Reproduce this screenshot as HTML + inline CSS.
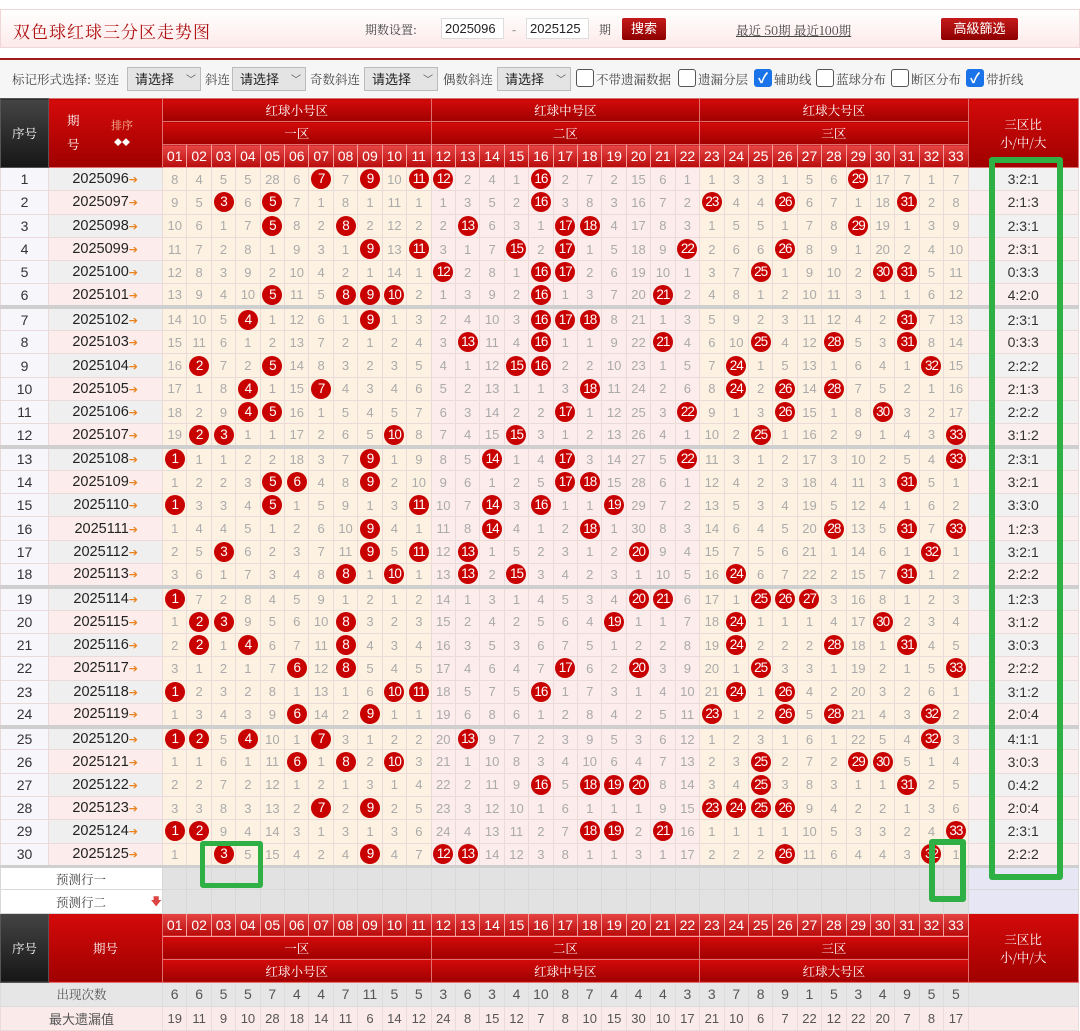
<!DOCTYPE html>
<html><head><meta charset="utf-8"><style>
*{margin:0;padding:0;box-sizing:border-box}
body{width:1080px;height:1018px;overflow:hidden;background:#fff;font-family:"Liberation Sans","Noto Sans CJK SC",sans-serif;position:relative}
.top{position:absolute;left:0;top:9px;width:1080px;height:39px;background:linear-gradient(#fff,#fdeaea);border:1px solid #f1d6d6}
.title{position:absolute;left:12px;top:8px;font-family:"Noto Serif CJK SC",serif;font-size:17px;color:#b01010;letter-spacing:1px}
.lab{position:absolute;top:11px;font-family:"Noto Serif CJK SC",serif;font-size:12px;color:#444}
.inp{position:absolute;top:8px;height:21px;width:63px;background:#fff;border:1px solid #ddd;font-size:13px;color:#222;line-height:19px;padding-left:3px}
.btn{position:absolute;background:linear-gradient(#c41a1a,#8e0000);color:#fff;font-size:13px;text-align:center;border-radius:2px}
.lnk{position:absolute;left:735px;top:11px;font-size:12.5px;color:#444;text-decoration:underline;font-family:"Noto Serif CJK SC",serif}
.bar{position:absolute;left:0;top:58px;width:1080px;height:40px;background:#f6f6f6;border-top:2px solid #a31a1a}
.bar span{position:absolute;top:10px;font-family:"Noto Serif CJK SC",serif;font-size:12.5px;color:#444}
.sel{position:absolute;top:7px;height:24px;width:74px;background:#e4e4e4;border:1px solid #bbb;font-size:13px;padding-left:7px;line-height:22px;color:#222;font-family:"Noto Sans CJK SC",sans-serif}
.sel:after{content:"﹀";position:absolute;right:4px;top:0;font-size:10px;color:#555}
.cb{position:absolute;top:9px;width:18px;height:18px;border:1px solid #555;border-radius:3px;background:#fff}
.cb.on{background:#1a73e8;border-color:#1a73e8;color:#fff;font-size:14px;line-height:16px;text-align:center;font-weight:bold}
table{position:absolute;left:0;top:98px;width:1078px;border-collapse:collapse;table-layout:fixed}
td,th{text-align:center;overflow:hidden;white-space:nowrap}
th{color:#fff;font-weight:normal;font-family:"Noto Serif CJK SC",serif;font-size:12.5px;background:linear-gradient(#d40a0a,#a00000);border:1px solid #e07070}
th.k{background:linear-gradient(#444,#161616);border:1px solid #555}
th.n{font-family:"Liberation Sans",sans-serif;font-size:14px;background:linear-gradient(#e84545,#b80c0c);border:1px solid #f3a0a0}
.hh th{height:23px}
tbody td{height:23.3px;font-size:13px;color:#aaa;border:1px solid #eadada}
td.s{background:#f6f6fb;color:#333;font-size:14px}
td.q{color:#222;font-size:14.5px;text-align:right;padding-right:24px}
tr.a td.q{background:#efefef} tr.b td.q{background:#fcecec}
td.q i{font-style:normal;color:#e8821e;font-size:11px;font-family:"DejaVu Sans",sans-serif}
td.r{color:#333;font-size:14px;background:#f1f1f1}
tr.b td.r{background:#fbeeee}
tr.g td{border-top:4px solid #cfcfcf}
td b{display:inline-block;width:20px;height:20px;border-radius:50%;background:#c80000;color:#fff;font-weight:normal;line-height:20px;font-size:13.5px;letter-spacing:-1px;vertical-align:middle}
col.z1,col.z3{background:#fdf2e2}
col.z2{background:#fcecec}
tr.p td{background:#e2e2e2;height:23.5px;border:1px solid #d8d8d8}
tr.p td.w{background:#fff;color:#444;text-align:left;padding-left:55px;font-family:"Noto Serif CJK SC",serif;font-size:12.5px}
tr.p td.v{background:#e6e6f4}
tr.c td{background:#e6e6e6;color:#555;font-size:14px;height:24px;border:1px solid #ddd}
tr.c td.w{font-family:"Noto Serif CJK SC",serif;font-size:12.5px}
tr.m td{background:#fbeaea;height:24px;color:#555}
.gr{position:absolute;border:6px solid #2eb045;border-radius:3px}
</style></head><body>
<div class="top">
<div class="title">双色球红球三分区走势图</div>
<div class="lab" style="left:364px">期数设置:</div>
<div class="inp" style="left:440px">2025096</div>
<div class="lab" style="left:511px">-</div>
<div class="inp" style="left:525px">2025125</div>
<div class="lab" style="left:598px">期</div>
<div class="btn" style="left:621px;top:8px;width:44px;height:22px;line-height:22px">搜索</div>
<div class="lnk">最近 50期 最近100期</div>
<div class="btn" style="left:940px;top:8px;width:77px;height:22px;line-height:22px">高級篩选</div>
</div>
<div class="bar">
<span style="left:12px">标记形式选择: 竖连</span>
<div class="sel" style="left:127px">请选择</div>
<span style="left:205px">斜连</span>
<div class="sel" style="left:232px">请选择</div>
<span style="left:310px">奇数斜连</span>
<div class="sel" style="left:364px">请选择</div>
<span style="left:443px">偶数斜连</span>
<div class="sel" style="left:497px">请选择</div>
<div class="cb" style="left:576px"></div><span style="left:596px">不带遗漏数据</span>
<div class="cb" style="left:678px"></div><span style="left:698px">遗漏分层</span>
<div class="cb on" style="left:754px">✓</div><span style="left:774px">辅助线</span>
<div class="cb" style="left:816px"></div><span style="left:836px">蓝球分布</span>
<div class="cb" style="left:891px"></div><span style="left:911px">断区分布</span>
<div class="cb on" style="left:966px">✓</div><span style="left:986px">带折线</span>
</div>
<table>
<colgroup><col style="width:48px"><col style="width:114px">
<col class="z1" span="11" style="width:24.42px"><col class="z2" span="11" style="width:24.42px"><col class="z3" span="11" style="width:24.42px"><col style="width:110px"></colgroup>
<thead>
<tr class="hh"><th class="k" rowspan="3" style="height:69px">序号</th><th rowspan="3"><div style="position:relative;height:60px"><span style="position:absolute;left:18px;top:8px">期</span><span style="position:absolute;left:18px;top:32px">号</span><span style="position:absolute;left:62px;top:14px;font-size:11px;color:#f7c0a0">排序<br><span style="font-size:8px;color:#fff">◆◆</span></span></div></th><th colspan="11">红球小号区</th><th colspan="11">红球中号区</th><th colspan="11">红球大号区</th><th rowspan="3">三区比<br>小/中/大</th></tr>
<tr class="hh"><th colspan="11">一区</th><th colspan="11">二区</th><th colspan="11">三区</th></tr>
<tr class="hh"><th class="n">01</th><th class="n">02</th><th class="n">03</th><th class="n">04</th><th class="n">05</th><th class="n">06</th><th class="n">07</th><th class="n">08</th><th class="n">09</th><th class="n">10</th><th class="n">11</th><th class="n">12</th><th class="n">13</th><th class="n">14</th><th class="n">15</th><th class="n">16</th><th class="n">17</th><th class="n">18</th><th class="n">19</th><th class="n">20</th><th class="n">21</th><th class="n">22</th><th class="n">23</th><th class="n">24</th><th class="n">25</th><th class="n">26</th><th class="n">27</th><th class="n">28</th><th class="n">29</th><th class="n">30</th><th class="n">31</th><th class="n">32</th><th class="n">33</th></tr>
</thead>
<tbody>
<tr class="a"><td class="s">1</td><td class="q">2025096<i>➔</i></td><td>8</td><td>4</td><td>5</td><td>5</td><td>28</td><td>6</td><td><b>7</b></td><td>7</td><td><b>9</b></td><td>10</td><td><b>11</b></td><td><b>12</b></td><td>2</td><td>4</td><td>1</td><td><b>16</b></td><td>2</td><td>7</td><td>2</td><td>15</td><td>6</td><td>1</td><td>1</td><td>3</td><td>3</td><td>1</td><td>5</td><td>6</td><td><b>29</b></td><td>17</td><td>7</td><td>1</td><td>7</td><td class="r">3:2:1</td></tr>
<tr class="b"><td class="s">2</td><td class="q">2025097<i>➔</i></td><td>9</td><td>5</td><td><b>3</b></td><td>6</td><td><b>5</b></td><td>7</td><td>1</td><td>8</td><td>1</td><td>11</td><td>1</td><td>1</td><td>3</td><td>5</td><td>2</td><td><b>16</b></td><td>3</td><td>8</td><td>3</td><td>16</td><td>7</td><td>2</td><td><b>23</b></td><td>4</td><td>4</td><td><b>26</b></td><td>6</td><td>7</td><td>1</td><td>18</td><td><b>31</b></td><td>2</td><td>8</td><td class="r">2:1:3</td></tr>
<tr class="a"><td class="s">3</td><td class="q">2025098<i>➔</i></td><td>10</td><td>6</td><td>1</td><td>7</td><td><b>5</b></td><td>8</td><td>2</td><td><b>8</b></td><td>2</td><td>12</td><td>2</td><td>2</td><td><b>13</b></td><td>6</td><td>3</td><td>1</td><td><b>17</b></td><td><b>18</b></td><td>4</td><td>17</td><td>8</td><td>3</td><td>1</td><td>5</td><td>5</td><td>1</td><td>7</td><td>8</td><td><b>29</b></td><td>19</td><td>1</td><td>3</td><td>9</td><td class="r">2:3:1</td></tr>
<tr class="b"><td class="s">4</td><td class="q">2025099<i>➔</i></td><td>11</td><td>7</td><td>2</td><td>8</td><td>1</td><td>9</td><td>3</td><td>1</td><td><b>9</b></td><td>13</td><td><b>11</b></td><td>3</td><td>1</td><td>7</td><td><b>15</b></td><td>2</td><td><b>17</b></td><td>1</td><td>5</td><td>18</td><td>9</td><td><b>22</b></td><td>2</td><td>6</td><td>6</td><td><b>26</b></td><td>8</td><td>9</td><td>1</td><td>20</td><td>2</td><td>4</td><td>10</td><td class="r">2:3:1</td></tr>
<tr class="a"><td class="s">5</td><td class="q">2025100<i>➔</i></td><td>12</td><td>8</td><td>3</td><td>9</td><td>2</td><td>10</td><td>4</td><td>2</td><td>1</td><td>14</td><td>1</td><td><b>12</b></td><td>2</td><td>8</td><td>1</td><td><b>16</b></td><td><b>17</b></td><td>2</td><td>6</td><td>19</td><td>10</td><td>1</td><td>3</td><td>7</td><td><b>25</b></td><td>1</td><td>9</td><td>10</td><td>2</td><td><b>30</b></td><td><b>31</b></td><td>5</td><td>11</td><td class="r">0:3:3</td></tr>
<tr class="b"><td class="s">6</td><td class="q">2025101<i>➔</i></td><td>13</td><td>9</td><td>4</td><td>10</td><td><b>5</b></td><td>11</td><td>5</td><td><b>8</b></td><td><b>9</b></td><td><b>10</b></td><td>2</td><td>1</td><td>3</td><td>9</td><td>2</td><td><b>16</b></td><td>1</td><td>3</td><td>7</td><td>20</td><td><b>21</b></td><td>2</td><td>4</td><td>8</td><td>1</td><td>2</td><td>10</td><td>11</td><td>3</td><td>1</td><td>1</td><td>6</td><td>12</td><td class="r">4:2:0</td></tr>
<tr class="a g"><td class="s">7</td><td class="q">2025102<i>➔</i></td><td>14</td><td>10</td><td>5</td><td><b>4</b></td><td>1</td><td>12</td><td>6</td><td>1</td><td><b>9</b></td><td>1</td><td>3</td><td>2</td><td>4</td><td>10</td><td>3</td><td><b>16</b></td><td><b>17</b></td><td><b>18</b></td><td>8</td><td>21</td><td>1</td><td>3</td><td>5</td><td>9</td><td>2</td><td>3</td><td>11</td><td>12</td><td>4</td><td>2</td><td><b>31</b></td><td>7</td><td>13</td><td class="r">2:3:1</td></tr>
<tr class="b"><td class="s">8</td><td class="q">2025103<i>➔</i></td><td>15</td><td>11</td><td>6</td><td>1</td><td>2</td><td>13</td><td>7</td><td>2</td><td>1</td><td>2</td><td>4</td><td>3</td><td><b>13</b></td><td>11</td><td>4</td><td><b>16</b></td><td>1</td><td>1</td><td>9</td><td>22</td><td><b>21</b></td><td>4</td><td>6</td><td>10</td><td><b>25</b></td><td>4</td><td>12</td><td><b>28</b></td><td>5</td><td>3</td><td><b>31</b></td><td>8</td><td>14</td><td class="r">0:3:3</td></tr>
<tr class="a"><td class="s">9</td><td class="q">2025104<i>➔</i></td><td>16</td><td><b>2</b></td><td>7</td><td>2</td><td><b>5</b></td><td>14</td><td>8</td><td>3</td><td>2</td><td>3</td><td>5</td><td>4</td><td>1</td><td>12</td><td><b>15</b></td><td><b>16</b></td><td>2</td><td>2</td><td>10</td><td>23</td><td>1</td><td>5</td><td>7</td><td><b>24</b></td><td>1</td><td>5</td><td>13</td><td>1</td><td>6</td><td>4</td><td>1</td><td><b>32</b></td><td>15</td><td class="r">2:2:2</td></tr>
<tr class="b"><td class="s">10</td><td class="q">2025105<i>➔</i></td><td>17</td><td>1</td><td>8</td><td><b>4</b></td><td>1</td><td>15</td><td><b>7</b></td><td>4</td><td>3</td><td>4</td><td>6</td><td>5</td><td>2</td><td>13</td><td>1</td><td>1</td><td>3</td><td><b>18</b></td><td>11</td><td>24</td><td>2</td><td>6</td><td>8</td><td><b>24</b></td><td>2</td><td><b>26</b></td><td>14</td><td><b>28</b></td><td>7</td><td>5</td><td>2</td><td>1</td><td>16</td><td class="r">2:1:3</td></tr>
<tr class="a"><td class="s">11</td><td class="q">2025106<i>➔</i></td><td>18</td><td>2</td><td>9</td><td><b>4</b></td><td><b>5</b></td><td>16</td><td>1</td><td>5</td><td>4</td><td>5</td><td>7</td><td>6</td><td>3</td><td>14</td><td>2</td><td>2</td><td><b>17</b></td><td>1</td><td>12</td><td>25</td><td>3</td><td><b>22</b></td><td>9</td><td>1</td><td>3</td><td><b>26</b></td><td>15</td><td>1</td><td>8</td><td><b>30</b></td><td>3</td><td>2</td><td>17</td><td class="r">2:2:2</td></tr>
<tr class="b"><td class="s">12</td><td class="q">2025107<i>➔</i></td><td>19</td><td><b>2</b></td><td><b>3</b></td><td>1</td><td>1</td><td>17</td><td>2</td><td>6</td><td>5</td><td><b>10</b></td><td>8</td><td>7</td><td>4</td><td>15</td><td><b>15</b></td><td>3</td><td>1</td><td>2</td><td>13</td><td>26</td><td>4</td><td>1</td><td>10</td><td>2</td><td><b>25</b></td><td>1</td><td>16</td><td>2</td><td>9</td><td>1</td><td>4</td><td>3</td><td><b>33</b></td><td class="r">3:1:2</td></tr>
<tr class="a g"><td class="s">13</td><td class="q">2025108<i>➔</i></td><td><b>1</b></td><td>1</td><td>1</td><td>2</td><td>2</td><td>18</td><td>3</td><td>7</td><td><b>9</b></td><td>1</td><td>9</td><td>8</td><td>5</td><td><b>14</b></td><td>1</td><td>4</td><td><b>17</b></td><td>3</td><td>14</td><td>27</td><td>5</td><td><b>22</b></td><td>11</td><td>3</td><td>1</td><td>2</td><td>17</td><td>3</td><td>10</td><td>2</td><td>5</td><td>4</td><td><b>33</b></td><td class="r">2:3:1</td></tr>
<tr class="b"><td class="s">14</td><td class="q">2025109<i>➔</i></td><td>1</td><td>2</td><td>2</td><td>3</td><td><b>5</b></td><td><b>6</b></td><td>4</td><td>8</td><td><b>9</b></td><td>2</td><td>10</td><td>9</td><td>6</td><td>1</td><td>2</td><td>5</td><td><b>17</b></td><td><b>18</b></td><td>15</td><td>28</td><td>6</td><td>1</td><td>12</td><td>4</td><td>2</td><td>3</td><td>18</td><td>4</td><td>11</td><td>3</td><td><b>31</b></td><td>5</td><td>1</td><td class="r">3:2:1</td></tr>
<tr class="a"><td class="s">15</td><td class="q">2025110<i>➔</i></td><td><b>1</b></td><td>3</td><td>3</td><td>4</td><td><b>5</b></td><td>1</td><td>5</td><td>9</td><td>1</td><td>3</td><td><b>11</b></td><td>10</td><td>7</td><td><b>14</b></td><td>3</td><td><b>16</b></td><td>1</td><td>1</td><td><b>19</b></td><td>29</td><td>7</td><td>2</td><td>13</td><td>5</td><td>3</td><td>4</td><td>19</td><td>5</td><td>12</td><td>4</td><td>1</td><td>6</td><td>2</td><td class="r">3:3:0</td></tr>
<tr class="b"><td class="s">16</td><td class="q">2025111<i>➔</i></td><td>1</td><td>4</td><td>4</td><td>5</td><td>1</td><td>2</td><td>6</td><td>10</td><td><b>9</b></td><td>4</td><td>1</td><td>11</td><td>8</td><td><b>14</b></td><td>4</td><td>1</td><td>2</td><td><b>18</b></td><td>1</td><td>30</td><td>8</td><td>3</td><td>14</td><td>6</td><td>4</td><td>5</td><td>20</td><td><b>28</b></td><td>13</td><td>5</td><td><b>31</b></td><td>7</td><td><b>33</b></td><td class="r">1:2:3</td></tr>
<tr class="a"><td class="s">17</td><td class="q">2025112<i>➔</i></td><td>2</td><td>5</td><td><b>3</b></td><td>6</td><td>2</td><td>3</td><td>7</td><td>11</td><td><b>9</b></td><td>5</td><td><b>11</b></td><td>12</td><td><b>13</b></td><td>1</td><td>5</td><td>2</td><td>3</td><td>1</td><td>2</td><td><b>20</b></td><td>9</td><td>4</td><td>15</td><td>7</td><td>5</td><td>6</td><td>21</td><td>1</td><td>14</td><td>6</td><td>1</td><td><b>32</b></td><td>1</td><td class="r">3:2:1</td></tr>
<tr class="b"><td class="s">18</td><td class="q">2025113<i>➔</i></td><td>3</td><td>6</td><td>1</td><td>7</td><td>3</td><td>4</td><td>8</td><td><b>8</b></td><td>1</td><td><b>10</b></td><td>1</td><td>13</td><td><b>13</b></td><td>2</td><td><b>15</b></td><td>3</td><td>4</td><td>2</td><td>3</td><td>1</td><td>10</td><td>5</td><td>16</td><td><b>24</b></td><td>6</td><td>7</td><td>22</td><td>2</td><td>15</td><td>7</td><td><b>31</b></td><td>1</td><td>2</td><td class="r">2:2:2</td></tr>
<tr class="a g"><td class="s">19</td><td class="q">2025114<i>➔</i></td><td><b>1</b></td><td>7</td><td>2</td><td>8</td><td>4</td><td>5</td><td>9</td><td>1</td><td>2</td><td>1</td><td>2</td><td>14</td><td>1</td><td>3</td><td>1</td><td>4</td><td>5</td><td>3</td><td>4</td><td><b>20</b></td><td><b>21</b></td><td>6</td><td>17</td><td>1</td><td><b>25</b></td><td><b>26</b></td><td><b>27</b></td><td>3</td><td>16</td><td>8</td><td>1</td><td>2</td><td>3</td><td class="r">1:2:3</td></tr>
<tr class="b"><td class="s">20</td><td class="q">2025115<i>➔</i></td><td>1</td><td><b>2</b></td><td><b>3</b></td><td>9</td><td>5</td><td>6</td><td>10</td><td><b>8</b></td><td>3</td><td>2</td><td>3</td><td>15</td><td>2</td><td>4</td><td>2</td><td>5</td><td>6</td><td>4</td><td><b>19</b></td><td>1</td><td>1</td><td>7</td><td>18</td><td><b>24</b></td><td>1</td><td>1</td><td>1</td><td>4</td><td>17</td><td><b>30</b></td><td>2</td><td>3</td><td>4</td><td class="r">3:1:2</td></tr>
<tr class="a"><td class="s">21</td><td class="q">2025116<i>➔</i></td><td>2</td><td><b>2</b></td><td>1</td><td><b>4</b></td><td>6</td><td>7</td><td>11</td><td><b>8</b></td><td>4</td><td>3</td><td>4</td><td>16</td><td>3</td><td>5</td><td>3</td><td>6</td><td>7</td><td>5</td><td>1</td><td>2</td><td>2</td><td>8</td><td>19</td><td><b>24</b></td><td>2</td><td>2</td><td>2</td><td><b>28</b></td><td>18</td><td>1</td><td><b>31</b></td><td>4</td><td>5</td><td class="r">3:0:3</td></tr>
<tr class="b"><td class="s">22</td><td class="q">2025117<i>➔</i></td><td>3</td><td>1</td><td>2</td><td>1</td><td>7</td><td><b>6</b></td><td>12</td><td><b>8</b></td><td>5</td><td>4</td><td>5</td><td>17</td><td>4</td><td>6</td><td>4</td><td>7</td><td><b>17</b></td><td>6</td><td>2</td><td><b>20</b></td><td>3</td><td>9</td><td>20</td><td>1</td><td><b>25</b></td><td>3</td><td>3</td><td>1</td><td>19</td><td>2</td><td>1</td><td>5</td><td><b>33</b></td><td class="r">2:2:2</td></tr>
<tr class="a"><td class="s">23</td><td class="q">2025118<i>➔</i></td><td><b>1</b></td><td>2</td><td>3</td><td>2</td><td>8</td><td>1</td><td>13</td><td>1</td><td>6</td><td><b>10</b></td><td><b>11</b></td><td>18</td><td>5</td><td>7</td><td>5</td><td><b>16</b></td><td>1</td><td>7</td><td>3</td><td>1</td><td>4</td><td>10</td><td>21</td><td><b>24</b></td><td>1</td><td><b>26</b></td><td>4</td><td>2</td><td>20</td><td>3</td><td>2</td><td>6</td><td>1</td><td class="r">3:1:2</td></tr>
<tr class="b"><td class="s">24</td><td class="q">2025119<i>➔</i></td><td>1</td><td>3</td><td>4</td><td>3</td><td>9</td><td><b>6</b></td><td>14</td><td>2</td><td><b>9</b></td><td>1</td><td>1</td><td>19</td><td>6</td><td>8</td><td>6</td><td>1</td><td>2</td><td>8</td><td>4</td><td>2</td><td>5</td><td>11</td><td><b>23</b></td><td>1</td><td>2</td><td><b>26</b></td><td>5</td><td><b>28</b></td><td>21</td><td>4</td><td>3</td><td><b>32</b></td><td>2</td><td class="r">2:0:4</td></tr>
<tr class="a g"><td class="s">25</td><td class="q">2025120<i>➔</i></td><td><b>1</b></td><td><b>2</b></td><td>5</td><td><b>4</b></td><td>10</td><td>1</td><td><b>7</b></td><td>3</td><td>1</td><td>2</td><td>2</td><td>20</td><td><b>13</b></td><td>9</td><td>7</td><td>2</td><td>3</td><td>9</td><td>5</td><td>3</td><td>6</td><td>12</td><td>1</td><td>2</td><td>3</td><td>1</td><td>6</td><td>1</td><td>22</td><td>5</td><td>4</td><td><b>32</b></td><td>3</td><td class="r">4:1:1</td></tr>
<tr class="b"><td class="s">26</td><td class="q">2025121<i>➔</i></td><td>1</td><td>1</td><td>6</td><td>1</td><td>11</td><td><b>6</b></td><td>1</td><td><b>8</b></td><td>2</td><td><b>10</b></td><td>3</td><td>21</td><td>1</td><td>10</td><td>8</td><td>3</td><td>4</td><td>10</td><td>6</td><td>4</td><td>7</td><td>13</td><td>2</td><td>3</td><td><b>25</b></td><td>2</td><td>7</td><td>2</td><td><b>29</b></td><td><b>30</b></td><td>5</td><td>1</td><td>4</td><td class="r">3:0:3</td></tr>
<tr class="a"><td class="s">27</td><td class="q">2025122<i>➔</i></td><td>2</td><td>2</td><td>7</td><td>2</td><td>12</td><td>1</td><td>2</td><td>1</td><td>3</td><td>1</td><td>4</td><td>22</td><td>2</td><td>11</td><td>9</td><td><b>16</b></td><td>5</td><td><b>18</b></td><td><b>19</b></td><td><b>20</b></td><td>8</td><td>14</td><td>3</td><td>4</td><td><b>25</b></td><td>3</td><td>8</td><td>3</td><td>1</td><td>1</td><td><b>31</b></td><td>2</td><td>5</td><td class="r">0:4:2</td></tr>
<tr class="b"><td class="s">28</td><td class="q">2025123<i>➔</i></td><td>3</td><td>3</td><td>8</td><td>3</td><td>13</td><td>2</td><td><b>7</b></td><td>2</td><td><b>9</b></td><td>2</td><td>5</td><td>23</td><td>3</td><td>12</td><td>10</td><td>1</td><td>6</td><td>1</td><td>1</td><td>1</td><td>9</td><td>15</td><td><b>23</b></td><td><b>24</b></td><td><b>25</b></td><td><b>26</b></td><td>9</td><td>4</td><td>2</td><td>2</td><td>1</td><td>3</td><td>6</td><td class="r">2:0:4</td></tr>
<tr class="a"><td class="s">29</td><td class="q">2025124<i>➔</i></td><td><b>1</b></td><td><b>2</b></td><td>9</td><td>4</td><td>14</td><td>3</td><td>1</td><td>3</td><td>1</td><td>3</td><td>6</td><td>24</td><td>4</td><td>13</td><td>11</td><td>2</td><td>7</td><td><b>18</b></td><td><b>19</b></td><td>2</td><td><b>21</b></td><td>16</td><td>1</td><td>1</td><td>1</td><td>1</td><td>10</td><td>5</td><td>3</td><td>3</td><td>2</td><td>4</td><td><b>33</b></td><td class="r">2:3:1</td></tr>
<tr class="b"><td class="s">30</td><td class="q">2025125<i>➔</i></td><td>1</td><td></td><td><b>3</b></td><td>5</td><td>15</td><td>4</td><td>2</td><td>4</td><td><b>9</b></td><td>4</td><td>7</td><td><b>12</b></td><td><b>13</b></td><td>14</td><td>12</td><td>3</td><td>8</td><td>1</td><td>1</td><td>3</td><td>1</td><td>17</td><td>2</td><td>2</td><td>2</td><td><b>26</b></td><td>11</td><td>6</td><td>4</td><td>4</td><td>3</td><td><b>32</b></td><td>1</td><td class="r">2:2:2</td></tr>
<tr class="p" style="border-top:3px solid #cfcfcf"><td class="w" colspan="2">预测行一</td><td></td><td></td><td></td><td></td><td></td><td></td><td></td><td></td><td></td><td></td><td></td><td></td><td></td><td></td><td></td><td></td><td></td><td></td><td></td><td></td><td></td><td></td><td></td><td></td><td></td><td></td><td></td><td></td><td></td><td></td><td></td><td></td><td></td><td class="v"></td></tr>
<tr class="p"><td class="w" colspan="2">预测行二<span style="position:absolute;left:150px;color:#d44;font-size:11px">🡇</span></td><td></td><td></td><td></td><td></td><td></td><td></td><td></td><td></td><td></td><td></td><td></td><td></td><td></td><td></td><td></td><td></td><td></td><td></td><td></td><td></td><td></td><td></td><td></td><td></td><td></td><td></td><td></td><td></td><td></td><td></td><td></td><td></td><td></td><td class="v"></td></tr>
</tbody>
<tbody>
<tr class="hh"><th class="k" rowspan="3">序号</th><th rowspan="3">期号</th><th class="n">01</th><th class="n">02</th><th class="n">03</th><th class="n">04</th><th class="n">05</th><th class="n">06</th><th class="n">07</th><th class="n">08</th><th class="n">09</th><th class="n">10</th><th class="n">11</th><th class="n">12</th><th class="n">13</th><th class="n">14</th><th class="n">15</th><th class="n">16</th><th class="n">17</th><th class="n">18</th><th class="n">19</th><th class="n">20</th><th class="n">21</th><th class="n">22</th><th class="n">23</th><th class="n">24</th><th class="n">25</th><th class="n">26</th><th class="n">27</th><th class="n">28</th><th class="n">29</th><th class="n">30</th><th class="n">31</th><th class="n">32</th><th class="n">33</th><th rowspan="3">三区比<br>小/中/大</th></tr>
<tr class="hh"><th colspan="11">一区</th><th colspan="11">二区</th><th colspan="11">三区</th></tr>
<tr class="hh"><th colspan="11">红球小号区</th><th colspan="11">红球中号区</th><th colspan="11">红球大号区</th></tr>
<tr class="c"><td class="w" colspan="2">出现次数</td><td>6</td><td>6</td><td>5</td><td>5</td><td>7</td><td>4</td><td>4</td><td>7</td><td>11</td><td>5</td><td>5</td><td>3</td><td>6</td><td>3</td><td>4</td><td>10</td><td>8</td><td>7</td><td>4</td><td>4</td><td>4</td><td>3</td><td>3</td><td>7</td><td>8</td><td>9</td><td>1</td><td>5</td><td>3</td><td>4</td><td>9</td><td>5</td><td>5</td><td></td></tr>
<tr class="m"><td colspan="2">最大遗漏值</td><td>19</td><td>11</td><td>9</td><td>10</td><td>28</td><td>18</td><td>14</td><td>11</td><td>6</td><td>14</td><td>12</td><td>24</td><td>8</td><td>15</td><td>12</td><td>7</td><td>8</td><td>10</td><td>15</td><td>30</td><td>10</td><td>17</td><td>21</td><td>10</td><td>6</td><td>7</td><td>22</td><td>12</td><td>22</td><td>20</td><td>7</td><td>8</td><td>17</td><td></td></tr>
</tbody>
</table>
<div class="gr" style="left:989px;top:157px;width:74px;height:723px"></div>
<div class="gr" style="left:200px;top:841px;width:63px;height:47px;border-width:5px"></div>
<div class="gr" style="left:929px;top:839px;width:37px;height:63px"></div>
</body></html>
